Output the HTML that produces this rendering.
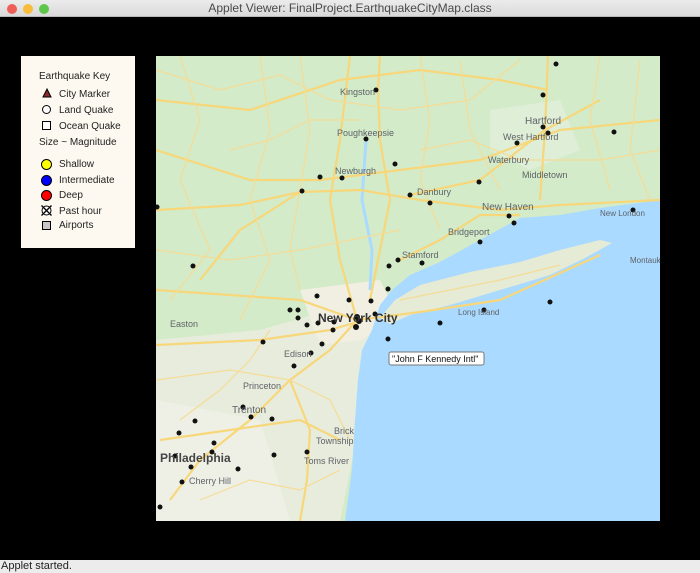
<!DOCTYPE html>
<html><head><meta charset="utf-8"><style>
body{margin:0;width:700px;height:573px;overflow:hidden;background:#000;font-family:"Liberation Sans",sans-serif;position:relative}
#title{position:absolute;left:0;top:0;width:700px;height:16px;background:linear-gradient(#ececec,#d9d9d9);border-bottom:1px solid #b8b8b8;text-align:center;font-size:12px;line-height:17px;color:#4a4a4a}
.dot{position:absolute;top:4px;width:10px;height:10px;border-radius:50%}
#status{position:absolute;left:0;top:560px;width:700px;height:13px;background:#ececec;font-size:11px;line-height:13px;color:#222;padding-left:1px}
#key{position:absolute;left:21px;top:56px;width:114px;height:192px;background:#fdf9f0;font-size:10px;color:#222}
#key div{position:absolute;white-space:nowrap}
</style></head><body>
<div id="title"><span class="dot" style="left:7px;background:#ee5f58"></span><span class="dot" style="left:23px;background:#f8bd3a"></span><span class="dot" style="left:39px;background:#5ec74a"></span>Applet Viewer: FinalProject.EarthquakeCityMap.class</div>

<svg style="position:absolute;left:0;top:0" width="700" height="573">
<defs><clipPath id="c"><rect x="156" y="56" width="504" height="465"/></clipPath></defs>
<g clip-path="url(#c)" font-family="Liberation Sans, sans-serif">
<rect x="156" y="56" width="504" height="465" fill="#d3ebc9"/>
<path d="M156 340 L260 330 L330 310 L370 300 L380 350 L360 420 L340 521 L156 521Z" fill="#e8ecdd"/>
<path d="M156 400 L260 420 L290 521 L156 521Z" fill="#eef0e6"/>
<path d="M300 290 L380 280 L400 320 L360 340 L320 345Z" fill="#f1efe1"/>
<path d="M490 110 L560 100 L580 150 L530 170 L490 150Z" fill="#dfeed7"/>
<path d="M660 200 L600 208 L560 215 L520 218 L480 240 L440 262 L410 275 L392 290 L380 305 L372 330 L362 350 L358 380 L355 420 L352 470 L345 521 L660 521Z" fill="#aadaff"/>
<path d="M380 318 L395 300 L420 285 L470 272 L520 262 L560 250 L600 240 L612 243 L585 258 L550 275 L500 290 L450 305 L410 315 L390 324Z" fill="#e6ebd6"/>
<path d="M366 140 L362 200 L372 250 L370 290" stroke="#aadaff" stroke-width="3" fill="none"/>
<g stroke="#f7d77a" stroke-width="2.2" fill="none">
<path d="M156 150 L250 180 L320 180 L400 170 L480 160 L560 130 L660 120"/>
<path d="M156 210 L240 205 L300 192 L360 190 L420 200 L500 210 L560 205 L660 200"/>
<path d="M156 290 L230 295 L300 300 L357 320 L420 312 L500 300 L600 255"/>
<path d="M156 345 L260 340 L330 330 L357 322"/>
<path d="M357 320 L330 350 L290 380 L250 420 L200 460 L170 500"/>
<path d="M370 300 L380 250 L390 200 L380 140 L378 90 L380 56"/>
<path d="M357 320 L340 260 L330 200 L340 140 L350 56"/>
<path d="M548 56 L545 130 L540 200"/>
<path d="M410 195 L480 180 L545 130 L600 100"/>
<path d="M290 380 L310 430 L307 480 L300 521"/>
<path d="M156 100 L250 110 L340 80 L420 70 L500 80 L548 90"/>
<path d="M200 280 L240 230 L300 192"/>
<path d="M400 260 L440 240 L480 215 L520 215"/>
<path d="M160 440 L230 430 L300 420 L340 440"/>
</g>
<g stroke="#f5dc96" stroke-width="1.2" fill="none">
<path d="M156 70 L220 90 L280 75 L330 100 L400 110 L470 100 L520 60"/>
<path d="M180 56 L200 120 L180 180 L210 250 L170 300"/>
<path d="M260 56 L270 130 L250 200 L270 260 L240 320"/>
<path d="M300 56 L310 130 L290 250 L300 290"/>
<path d="M420 56 L430 120 L420 180 L440 230"/>
<path d="M460 60 L470 130 L500 190"/>
<path d="M600 56 L590 120 L610 190"/>
<path d="M640 60 L630 150 L650 200"/>
<path d="M156 250 L230 260 L300 250 L350 240 L400 230"/>
<path d="M156 380 L230 370 L290 380 L330 400 L350 440"/>
<path d="M180 420 L220 390 L250 360 L270 330"/>
<path d="M200 500 L250 480 L300 490 L340 470"/>
<path d="M420 150 L470 140 L520 160 L600 160 L660 150"/>
<path d="M230 150 L270 140 L310 120 L360 120"/>
<path d="M400 300 L450 290 L500 280 L560 265"/>
</g>
<g fill="#111">
<circle cx="376" cy="90" r="2.5"/><circle cx="543" cy="95" r="2.5"/><circle cx="556" cy="64" r="2.5"/><circle cx="543" cy="127" r="2.5"/><circle cx="548" cy="133" r="2.5"/><circle cx="517" cy="143" r="2.5"/><circle cx="614" cy="132" r="2.5"/><circle cx="366" cy="139" r="2.5"/><circle cx="395" cy="164" r="2.5"/><circle cx="320" cy="177" r="2.5"/><circle cx="342" cy="178" r="2.5"/><circle cx="302" cy="191" r="2.5"/><circle cx="410" cy="195" r="2.5"/><circle cx="430" cy="203" r="2.5"/><circle cx="479" cy="182" r="2.5"/><circle cx="509" cy="216" r="2.5"/><circle cx="514" cy="223" r="2.5"/><circle cx="633" cy="210" r="2.5"/><circle cx="480" cy="242" r="2.5"/><circle cx="422" cy="263" r="2.5"/><circle cx="398" cy="260" r="2.5"/><circle cx="389" cy="266" r="2.5"/><circle cx="388" cy="289" r="2.5"/><circle cx="193" cy="266" r="2.5"/><circle cx="317" cy="296" r="2.5"/><circle cx="349" cy="300" r="2.5"/><circle cx="371" cy="301" r="2.5"/><circle cx="290" cy="310" r="2.5"/><circle cx="298" cy="310" r="2.5"/><circle cx="298" cy="318" r="2.5"/><circle cx="307" cy="325" r="2.5"/><circle cx="318" cy="323" r="2.5"/><circle cx="334" cy="322" r="2.5"/><circle cx="357" cy="317" r="3"/><circle cx="359" cy="321" r="3"/><circle cx="356" cy="327" r="3"/><circle cx="333" cy="330" r="2.5"/><circle cx="375" cy="314" r="2.5"/><circle cx="440" cy="323" r="2.5"/><circle cx="484" cy="310" r="2.5"/><circle cx="550" cy="302" r="2.5"/><circle cx="388" cy="339" r="2.5"/><circle cx="263" cy="342" r="2.5"/><circle cx="322" cy="344" r="2.5"/><circle cx="311" cy="353" r="2.5"/><circle cx="294" cy="366" r="2.5"/><circle cx="243" cy="407" r="2.5"/><circle cx="251" cy="417" r="2.5"/><circle cx="272" cy="419" r="2.5"/><circle cx="195" cy="421" r="2.5"/><circle cx="179" cy="433" r="2.5"/><circle cx="214" cy="443" r="2.5"/><circle cx="212" cy="452" r="2.5"/><circle cx="175" cy="456" r="2.5"/><circle cx="274" cy="455" r="2.5"/><circle cx="307" cy="452" r="2.5"/><circle cx="191" cy="467" r="2.5"/><circle cx="238" cy="469" r="2.5"/><circle cx="182" cy="482" r="2.5"/><circle cx="160" cy="507" r="2.5"/><circle cx="157" cy="207" r="2.5"/>
</g>
<g fill="#5f6368" font-size="9">
<text x="340" y="95">Kingston</text><text x="337" y="136">Poughkeepsie</text><text x="335" y="174">Newburgh</text>
<text x="417" y="195">Danbury</text><text x="488" y="163">Waterbury</text><text x="503" y="140">West Hartford</text>
<text x="525" y="124" font-size="10">Hartford</text><text x="522" y="178">Middletown</text><text x="600" y="216" font-size="8">New London</text>
<text x="482" y="210" font-size="10">New Haven</text><text x="448" y="235">Bridgeport</text><text x="402" y="258">Stamford</text>
<text x="458" y="315" font-size="8">Long Island</text><text x="630" y="263" font-size="8">Montauk</text>
<text x="170" y="327">Easton</text><text x="284" y="357">Edison</text><text x="243" y="389">Princeton</text>
<text x="232" y="413" font-size="10">Trenton</text><text x="334" y="434">Brick</text><text x="316" y="444">Township</text>
<text x="304" y="464">Toms River</text><text x="189" y="484">Cherry Hill</text>
<text x="160" y="462" font-size="12" font-weight="bold" fill="#444">Philadelphia</text>
<text x="318" y="322" font-size="12" font-weight="bold" fill="#333">New York City</text>
</g>
<rect x="389" y="352" width="95" height="13" rx="2" fill="#fff" stroke="#777"/>
<text x="392" y="362" font-size="9" fill="#111">"John F Kennedy Intl"</text>
</g>
</svg>

<div id="key">
<div style="left:18px;top:15px">Earthquake Key</div>
<svg style="position:absolute;left:21px;top:32px" width="10" height="10"><path d="M5 1 L9 9 L1 9Z" fill="#8b2a2a" stroke="#000" stroke-width="1"/></svg>
<div style="left:38px;top:33px">City Marker</div>
<div style="left:21px;top:49px;width:7px;height:7px;border:1.5px solid #000;border-radius:50%;background:#fff"></div>
<div style="left:38px;top:49px">Land Quake</div>
<div style="left:21px;top:65px;width:7px;height:7px;border:1.5px solid #000;background:#fff"></div>
<div style="left:38px;top:65px">Ocean Quake</div>
<div style="left:18px;top:81px">Size ~ Magnitude</div>
<div style="left:20px;top:103px;width:9px;height:9px;border:1px solid #000;border-radius:50%;background:#ffff00"></div>
<div style="left:38px;top:103px">Shallow</div>
<div style="left:20px;top:119px;width:9px;height:9px;border:1px solid #000;border-radius:50%;background:#0000ff"></div>
<div style="left:38px;top:119px">Intermediate</div>
<div style="left:20px;top:134px;width:9px;height:9px;border:1px solid #000;border-radius:50%;background:#ff0000"></div>
<div style="left:38px;top:134px">Deep</div>
<svg style="position:absolute;left:20px;top:149px" width="11" height="11"><circle cx="5.5" cy="5.5" r="4.5" fill="#fff" stroke="#000"/><path d="M0.5 0.5L10.5 10.5M10.5 0.5L0.5 10.5" stroke="#000" stroke-width="1.3"/></svg>
<div style="left:38px;top:150px">Past hour</div>
<div style="left:21px;top:165px;width:7px;height:7px;border:1.5px solid #000;background:#c8c8c8"></div>
<div style="left:38px;top:164px">Airports</div>
</div>

<div id="status">Applet started.</div>
</body></html>
